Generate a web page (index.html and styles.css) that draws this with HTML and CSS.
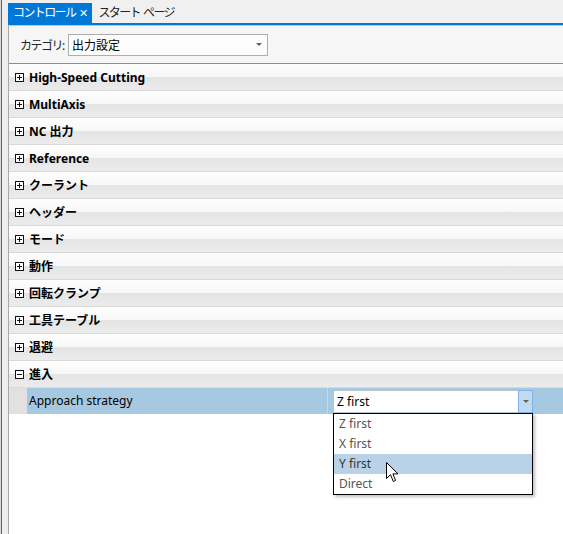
FILE: index.html
```html
<!DOCTYPE html>
<html lang="ja">
<head>
  <meta charset="UTF-8" />
  <title>コントロール</title>
  <link rel="stylesheet" href="styles.css">
</head>
<body>
  <div class="window">
    <div class="edge"></div>

    <div class="main">
      <!-- タブ -->
      <div class="tabs">
        <div class="tab active"><span class="tab-text">コントロール</span><span class="tab-close">✕</span></div>
        <div class="tab"><span class="tab-text">スタート&nbsp; ページ</span></div>
      </div>

      <div class="panel">
        <!-- カテゴリ -->
        <div class="toolbar">
          <span class="toolbar-label">カテゴリ:</span>
          <div class="combo">
            <span class="combo-text">出力設定</span>
            <span class="combo-arrow"></span>
          </div>
        </div>

        <!-- プロパティグリッド -->
        <div class="grid">
          <div class="group"><span class="toggle plus"></span>High-Speed Cutting</div>
          <div class="group"><span class="toggle plus"></span>MultiAxis</div>
          <div class="group"><span class="toggle plus"></span>NC 出力</div>
          <div class="group"><span class="toggle plus"></span>Reference</div>
          <div class="group"><span class="toggle plus"></span>クーラント</div>
          <div class="group"><span class="toggle plus"></span>ヘッダー</div>
          <div class="group"><span class="toggle plus"></span>モード</div>
          <div class="group"><span class="toggle plus"></span>動作</div>
          <div class="group"><span class="toggle plus"></span>回転クランプ</div>
          <div class="group"><span class="toggle plus"></span>工具テーブル</div>
          <div class="group"><span class="toggle plus"></span>退避</div>
          <div class="group"><span class="toggle"></span>進入</div>

          <div class="prop-row">
            <div class="prop-indent"></div>
            <div class="prop-name">Approach strategy</div>
            <div class="prop-value">
              <div class="combo combo-edit">
                <span class="combo-text">Z first</span>
                <span class="combo-button"><span class="combo-arrow"></span></span>
              </div>
              <ul class="dropdown">
                <li>Z first</li>
                <li>X first</li>
                <li class="hover">Y first</li>
                <li>Direct</li>
              </ul>
            </div>
          </div>
        </div>
      </div>
    </div>
  </div>

  <!-- マウスカーソル -->
  <svg class="cursor" width="13" height="21" viewBox="0 0 13 21">
    <path d="M0.5 0.5 L0.5 16.5 L4.5 12.7 L7.3 19.5 L9.6 18.5 L6.9 11.9 L12 11.9 Z" fill="#fff" stroke="#000" stroke-width="1" stroke-linejoin="miter"/>
  </svg>
</body>
</html>
```

FILE: styles.css
```css
body {
  margin: 0;
  font-family: "Noto Sans", "Noto Sans CJK JP", sans-serif;
  font-size: 12px;
  color: #000;
  background: #fff;
  overflow: hidden;
}
.window {
  display: flex;
  height: 534px;
}
.edge {
  width: 8px;
  flex: none;
  background: linear-gradient(to right, #d8d8d8 0 1px, #1b76c9 1px 2px, #efefef 2px);
}
.main {
  flex: 1;
  display: flex;
  flex-direction: column;
  min-width: 0;
}
.tabs {
  height: 23px;
  background: #f0f0f0;
  border-bottom: 2px solid #0078d7;
  display: flex;
  align-items: flex-end;
}
.tab {
  height: 20px;
  line-height: 20px;
  padding: 0 6px;
  color: #222;
  white-space: nowrap;
  display: flex;
  align-items: center;
}
.tab-text {
  letter-spacing: -1.6px;
}
.tab.active {
  background: #0078d7;
  color: #fff;
  padding: 0 4px 0 5px;
}
.tab-close {
  margin-left: 4px;
  font-size: 11px;
}
.panel {
  flex: 1;
  border-left: 1px solid #a8a8a8;
  border-top: 1px solid #c4c4c4;
  display: flex;
  flex-direction: column;
}
.toolbar {
  height: 37px;
  background: #f6f6f6;
  border-bottom: 1px solid #8c8c8c;
  display: flex;
  align-items: center;
  padding-left: 11px;
}
.toolbar-label {
  width: 48px;
  color: #222;
  white-space: nowrap;
  letter-spacing: -1.5px;
}
.combo {
  position: relative;
  width: 198px;
  height: 20px;
  border: 1px solid #adadad;
  background: #fcfcfc;
  display: flex;
  align-items: center;
}
.combo-text {
  flex: 1;
  padding-left: 3px;
}
.combo-arrow {
  width: 0;
  height: 0;
  margin-right: 5px;
  border-left: 3px solid transparent;
  border-right: 3px solid transparent;
  border-top: 3px solid #606060;
}
.group {
  height: 26px;
  border-bottom: 1px solid #d9d9d9;
  background: linear-gradient(#fefefe, #f7f7f7 50%, #e4e4e4 50%, #ececec);
  display: flex;
  align-items: center;
  font-weight: 700;
  white-space: nowrap;
}
.toggle {
  position: relative;
  width: 7px;
  height: 7px;
  border: 1px solid #111;
  margin: 0 5px 0 6px;
  background: #fff;
}
.toggle::before {
  content: "";
  position: absolute;
  left: 1px;
  top: 3px;
  width: 5px;
  height: 1px;
  background: #111;
}
.toggle.plus::after {
  content: "";
  position: absolute;
  left: 3px;
  top: 1px;
  width: 1px;
  height: 5px;
  background: #111;
}
.prop-row {
  display: flex;
  height: 26px;
}
.prop-indent {
  width: 18px;
  background: #e1e1e1;
}
.prop-name {
  width: 298px;
  background: #a6c8e0;
  border-right: 1px solid #c3d9ea;
  padding-left: 2px;
  line-height: 26px;
}
.prop-value {
  flex: 1;
  position: relative;
  background: #a6c8e0;
  padding: 2px 0 0 5px;
}
.combo-edit {
  border-color: #b8c4cf;
  height: 21px;
  background: #fff;
}
.combo-edit .combo-text {
  color: #000;
}
.combo-button {
  width: 13px;
  height: 21px;
  border: 1px solid #7eb4ea;
  margin: -1px -1px 0 0;
  background: #c2daee;
  display: flex;
  align-items: center;
  justify-content: center;
}
.combo-button .combo-arrow {
  margin: 0;
}
.dropdown {
  position: absolute;
  left: 5px;
  top: 25px;
  width: 198px;
  margin: 0;
  padding: 0;
  list-style: none;
  background: #fff;
  border: 1px solid #000;
  box-shadow: 2px 2px 3px rgba(0, 0, 0, 0.25);
}
.dropdown li {
  height: 20px;
  line-height: 20px;
  padding-left: 5px;
  color: #555;
}
.dropdown li.hover {
  background: #bad2e7;
  color: #333;
}
.cursor {
  position: absolute;
  left: 386px;
  top: 462px;
}
```
